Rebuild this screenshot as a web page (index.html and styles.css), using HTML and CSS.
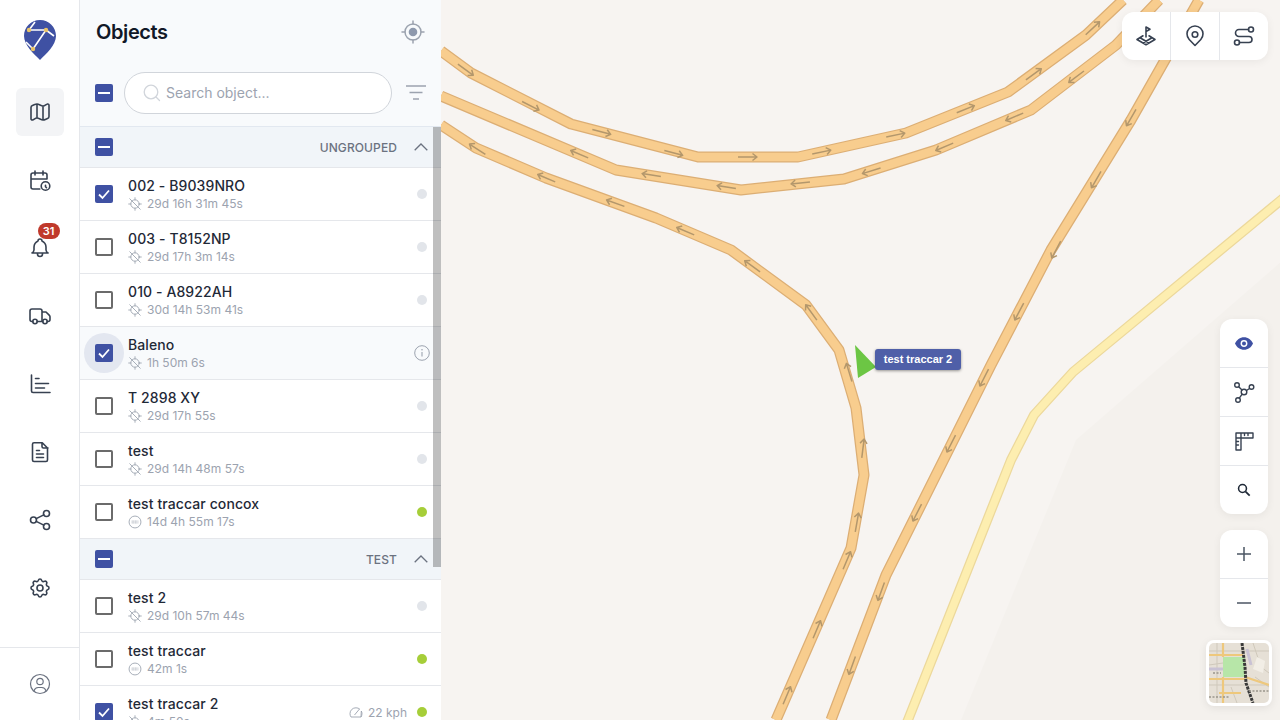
FILE: index.html
```html
<!DOCTYPE html>
<html lang="en">
<head>
<meta charset="utf-8">
<title>Objects</title>
<link rel="stylesheet" href="styles.css">
</head>
<body>
<svg class="defs" width="0" height="0" aria-hidden="true">
  <defs>
    <symbol id="i-gps" viewBox="0 0 16 16"><g fill="none" stroke="currentColor" stroke-width="1" stroke-linecap="round"><circle cx="8" cy="8" r="4.8"/><path d="M8 .8v2.4M8 12.8v2.4M.8 8h2.4M12.8 8h2.4M2 2l12 12"/></g></symbol>
    <symbol id="i-stop" viewBox="0 0 16 16"><circle cx="8" cy="8" r="6.8" fill="none" stroke="currentColor" stroke-width="1"/><path d="M4.2 6.8h7.6M4.2 8h7.6M4.2 9.2h7.6" stroke="currentColor" stroke-width=".7" stroke-dasharray="1.2 .6"/></symbol>
    <symbol id="a" viewBox="-11 -5 22 10" overflow="visible"><path d="M-10 0H9M4.5-3.5 9 0 4.5 3.5" fill="none" stroke="#b3976c" stroke-width="1.5" stroke-linejoin="round"/></symbol>
  </defs>
</svg>
<div class="app">
  <nav class="rail">
    <div class="logo">
      <svg width="32" height="40" viewBox="0 0 32 40"><path d="M16 0C7 0 0 7 0 16c0 9 10 18 16 24 6-6 16-15 16-24C32 7 25 0 16 0z" fill="#3f51a3"/><path d="M5 10h17L9 29M9 29l-7-7M22 10l8 6M5 10l6-8" fill="none" stroke="#fff" stroke-width="1.6"/><circle cx="5" cy="10" r="2.2" fill="#e9c46a"/><circle cx="22" cy="10" r="2.2" fill="#e9c46a"/><circle cx="9" cy="29" r="2.2" fill="#e9c46a"/></svg>
    </div>
    <div class="rail-items">
      <a class="rail-item active"><svg class="ic" viewBox="0 0 24 24"><path d="M3 7.5c0-1 .5-1.7 1.4-2C6 5 7.500 4 9 4c2 0 4 2 6 2s2.800-1.500 4.500-2c.9-.2 1.500.5 1.500 1.300V16.500c0 1-.5 1.700-1.400 2C18 19 16.500 20 15 20c-2 0-4-2-6-2s-2.800 1.500-4.500 2c-.9.2-1.500-.5-1.500-1.300zM9 4v14M15 6v14"/></svg></a>
      <a class="rail-item"><svg class="ic" viewBox="0 0 24 24"><path d="M11.800 21H5a2 2 0 0 1-2-2V7a2 2 0 0 1 2-2h12a2 2 0 0 1 2 2v4M15 3v4M7 3v4M3 11h16M17.500 17.200v1.500l1 1"/><circle cx="17.500" cy="18" r="4.300"/></svg></a>
      <a class="rail-item"><svg class="ic" viewBox="0 0 24 24"><path d="M10 5a2 2 0 1 1 4 0 7 7 0 0 1 4 6v3a4 4 0 0 0 2 3H4a4 4 0 0 0 2-3v-3a7 7 0 0 1 4-6M9.500 17v1a2.500 2.500 0 0 0 5 0v-1"/></svg><span class="badge">31</span></a>
      <a class="rail-item"><svg class="ic" viewBox="0 0 24 24"><circle cx="7" cy="17.500" r="2.200"/><circle cx="17" cy="17.500" r="2.200"/><path d="M4.800 17.500H4a2 2 0 0 1-2-2V7a2 2 0 0 1 2-2h8a2 2 0 0 1 2 2v10.500M9.200 17.500h5.600M19.200 17.500h.8a2 2 0 0 0 2-2v-2.700a2 2 0 0 0-.6-1.400L18 8h-4"/></svg></a>
      <a class="rail-item"><svg class="ic" viewBox="0 0 24 24"><path d="M3.500 3v16a1.500 1.500 0 0 0 1.500 1.500h17M7.500 6.500h3.500M7.500 11.500h13M7.500 16h9"/></svg></a>
      <a class="rail-item"><svg class="ic" viewBox="0 0 24 24"><path d="M14 2.800v3.700a1.500 1.500 0 0 0 1.500 1.500H20M18 21.500H6a1.500 1.500 0 0 1-1.500-1.500V4.300A1.500 1.500 0 0 1 6 2.800h8.300l5.200 5.200v12a1.500 1.500 0 0 1-1.500 1.500zM8.500 10.500h3M8.500 14h7M8.500 17.500h7"/></svg></a>
      <a class="rail-item"><svg class="ic" viewBox="0 0 24 24"><circle cx="5.500" cy="12" r="3"/><circle cx="18.500" cy="5.500" r="3"/><circle cx="18.500" cy="18.500" r="3"/><path d="M8.200 10.600l7.600-3.700M8.200 13.400l7.600 3.700"/></svg></a>
      <a class="rail-item"><svg class="ic" viewBox="0 0 24 24"><path d="M10.325 4.317c.426-1.756 2.924-1.756 3.350 0a1.724 1.724 0 0 0 2.573 1.066c1.543-.94 3.310.826 2.370 2.370a1.724 1.724 0 0 0 1.065 2.572c1.756.426 1.756 2.924 0 3.350a1.724 1.724 0 0 0-1.066 2.573c.94 1.543-.826 3.310-2.370 2.370a1.724 1.724 0 0 0-2.572 1.065c-.426 1.756-2.924 1.756-3.350 0a1.724 1.724 0 0 0-2.573-1.066c-1.543.94-3.310-.826-2.370-2.370a1.724 1.724 0 0 0-1.065-2.572c-1.756-.426-1.756-2.924 0-3.350a1.724 1.724 0 0 0 1.066-2.573c-.94-1.543.826-3.310 2.370-2.370 1 .608 2.296.07 2.572-1.065z"/><circle cx="12" cy="12" r="3"/></svg></a>
    </div>
    <div class="rail-foot"><svg class="ic avatar" viewBox="0 0 24 24"><circle cx="12" cy="12" r="9.500"/><circle cx="12" cy="9.500" r="3.200"/><path d="M6 18.800a4.500 4.500 0 0 1 4.200-3.300h3.600a4.500 4.500 0 0 1 4.200 3.300"/></svg></div>
  </nav>

  <section class="panel">
    <header class="panel-head">
      <h1 class="title">Objects</h1>
      <svg class="target" viewBox="0 0 24 24"><circle cx="12" cy="12" r="8" fill="none" stroke="#9ca3af" stroke-width="1.500"/><circle cx="12" cy="12" r="4.300" fill="#8e99ad"/><path d="M12 1v3M12 20v3M1 12h3M20 12h3" stroke="#9ca3af" stroke-width="1.500" stroke-linecap="round"/></svg>
    </header>
    <div class="search-row">
      <span class="cb on"><span class="dash"></span></span>
      <label class="search">
        <svg class="search-ic" viewBox="0 0 20 20"><circle cx="9" cy="9" r="6.800" fill="none" stroke="#d1d5db" stroke-width="1.300"/><path d="M14 14l3.500 3.500" stroke="#d1d5db" stroke-width="1.300" stroke-linecap="round"/></svg>
        <span class="placeholder">Search object...</span>
      </label>
      <svg class="filter" viewBox="0 0 20 16"><path d="M0 1h20M3.500 7.500h13M7 14h6" stroke="#9ca3af" stroke-width="1.500"/></svg>
    </div>
    <div class="list">
      <div class="group"><span class="cb on"><span class="dash"></span></span><span class="group-name">UNGROUPED</span><svg class="chev" viewBox="0 0 14 8"><path d="M.7 7.300 7 1l6.300 6.300" fill="none" stroke="#6b7280" stroke-width="1.300"/></svg></div>
      <div class="row"><span class="cb on"><svg class="tick" viewBox="0 0 18 18"><path d="M4 9.500l3.500 3.500L14 5.500" fill="none" stroke="#fff" stroke-width="1.800"/></svg></span><div class="info"><div class="name">002 - B9039NRO</div><div class="sub"><svg class="sub-ic"><use href="#i-gps"/></svg>29d 16h 31m 45s</div></div><span class="dot"></span></div>
      <div class="row"><span class="cb"></span><div class="info"><div class="name">003 - T8152NP</div><div class="sub"><svg class="sub-ic"><use href="#i-gps"/></svg>29d 17h 3m 14s</div></div><span class="dot"></span></div>
      <div class="row"><span class="cb"></span><div class="info"><div class="name">010 - A8922AH</div><div class="sub"><svg class="sub-ic"><use href="#i-gps"/></svg>30d 14h 53m 41s</div></div><span class="dot"></span></div>
      <div class="row hover"><span class="halo"></span><span class="cb on"><svg class="tick" viewBox="0 0 18 18"><path d="M4 9.500l3.500 3.500L14 5.500" fill="none" stroke="#fff" stroke-width="1.800"/></svg></span><div class="info"><div class="name">Baleno</div><div class="sub"><svg class="sub-ic"><use href="#i-gps"/></svg>1h 50m 6s</div></div><svg class="info-ic" viewBox="0 0 16 16"><circle cx="8" cy="8" r="7.300" fill="none" stroke="#9ca3af"/><path d="M8 7v4.500" stroke="#9ca3af" stroke-width="1.100"/><circle cx="8" cy="4.800" r=".8" fill="#9ca3af"/></svg></div>
      <div class="row"><span class="cb"></span><div class="info"><div class="name">T 2898 XY</div><div class="sub"><svg class="sub-ic"><use href="#i-gps"/></svg>29d 17h 55s</div></div><span class="dot"></span></div>
      <div class="row"><span class="cb"></span><div class="info"><div class="name">test</div><div class="sub"><svg class="sub-ic"><use href="#i-gps"/></svg>29d 14h 48m 57s</div></div><span class="dot"></span></div>
      <div class="row"><span class="cb"></span><div class="info"><div class="name">test traccar concox</div><div class="sub"><svg class="sub-ic"><use href="#i-stop"/></svg>14d 4h 55m 17s</div></div><span class="dot live"></span></div>
      <div class="group"><span class="cb on"><span class="dash"></span></span><span class="group-name">TEST</span><svg class="chev" viewBox="0 0 14 8"><path d="M.7 7.300 7 1l6.300 6.300" fill="none" stroke="#6b7280" stroke-width="1.300"/></svg></div>
      <div class="row"><span class="cb"></span><div class="info"><div class="name">test 2</div><div class="sub"><svg class="sub-ic"><use href="#i-gps"/></svg>29d 10h 57m 44s</div></div><span class="dot"></span></div>
      <div class="row"><span class="cb"></span><div class="info"><div class="name">test traccar</div><div class="sub"><svg class="sub-ic"><use href="#i-stop"/></svg>42m 1s</div></div><span class="dot live"></span></div>
      <div class="row"><span class="cb on"><svg class="tick" viewBox="0 0 18 18"><path d="M4 9.500l3.500 3.500L14 5.500" fill="none" stroke="#fff" stroke-width="1.800"/></svg></span><div class="info"><div class="name">test traccar 2</div><div class="sub"><svg class="sub-ic"><use href="#i-gps"/></svg>4m 50s</div></div><span class="speed"><svg class="speed-ic" viewBox="0 0 14 12"><path d="M2 11A6 6 0 0 1 1 7.500 5.800 5.800 0 0 1 7 1.800c1.500 0 2.800.5 3.800 1.300M12.300 5c.4.800.7 1.600.7 2.500 0 1.300-.4 2.500-1 3.500zM2 11h10M5.500 9l5-6" fill="none" stroke="#9ca3af" stroke-width=".9"/></svg>22 kph</span><span class="dot live"></span></div>
      <div class="thumb"></div>
    </div>
  </section>

  <main class="map">
    <svg class="map-art" viewBox="440 0 840 720">
      <rect x="440" y="0" width="840" height="720" fill="#f7f4f1"/>
      <path d="M1280 262 1075 440 960 720H1280z" fill="#f4f1ed"/>
      <g fill="none" stroke-linejoin="round">
        <g stroke="#dcae74" stroke-width="11">
          <path d="M440 51 470 73 570 124 697 157H797L905 133 1007 92 1085 35 1122 0"/>
          <path d="M440 96 615 170 740 190 843 179 935 150 1030 110 1115 45 1158 0"/>
          <path d="M440 125 475 148 545 178 655 218 730 250 805 305 838 350 855 408 863 475 850 548 775 720"/>
          <path d="M1198 0 1130 120 1050 250 990 365 885 575 830 720"/>
        </g>
        <g stroke="#f8cd8e" stroke-width="8.500">
          <path d="M440 51 470 73 570 124 697 157H797L905 133 1007 92 1085 35 1122 0"/>
          <path d="M440 96 615 170 740 190 843 179 935 150 1030 110 1115 45 1158 0"/>
          <path d="M440 125 475 148 545 178 655 218 730 250 805 305 838 350 855 408 863 475 850 548 775 720"/>
          <path d="M1198 0 1130 120 1050 250 990 365 885 575 830 720"/>
        </g>
        <path d="M1285 196 1072 372 1033 415 1010 460 905 725" stroke="#ecd89b" stroke-width="10"/>
        <path d="M1285 196 1072 372 1033 415 1010 460 905 725" stroke="#fdeeb0" stroke-width="7.500"/>
      </g>
      <g>
        <use href="#a" width="22" height="10" x="-11" y="-5" transform="translate(465 70) rotate(36)"/>
        <use href="#a" width="22" height="10" x="-11" y="-5" transform="translate(530 106) rotate(27)"/>
        <use href="#a" width="22" height="10" x="-11" y="-5" transform="translate(601 132) rotate(15)"/>
        <use href="#a" width="22" height="10" x="-11" y="-5" transform="translate(673 153) rotate(15)"/>
        <use href="#a" width="22" height="10" x="-11" y="-5" transform="translate(747 157)"/>
        <use href="#a" width="22" height="10" x="-11" y="-5" transform="translate(821 152) rotate(-12)"/>
        <use href="#a" width="22" height="10" x="-11" y="-5" transform="translate(895 135) rotate(-12)"/>
        <use href="#a" width="22" height="10" x="-11" y="-5" transform="translate(965 109) rotate(-22)"/>
        <use href="#a" width="22" height="10" x="-11" y="-5" transform="translate(1033 74) rotate(-36)"/>
        <use href="#a" width="22" height="10" x="-11" y="-5" transform="translate(1092 28) rotate(-43)"/>
        <use href="#a" width="22" height="10" x="-11" y="-5" transform="translate(578 154) rotate(203)"/>
        <use href="#a" width="22" height="10" x="-11" y="-5" transform="translate(650 175) rotate(189)"/>
        <use href="#a" width="22" height="10" x="-11" y="-5" transform="translate(725 187) rotate(189)"/>
        <use href="#a" width="22" height="10" x="-11" y="-5" transform="translate(799 183) rotate(174)"/>
        <use href="#a" width="22" height="10" x="-11" y="-5" transform="translate(870 171) rotate(163)"/>
        <use href="#a" width="22" height="10" x="-11" y="-5" transform="translate(943 147) rotate(157)"/>
        <use href="#a" width="22" height="10" x="-11" y="-5" transform="translate(1013 117) rotate(157)"/>
        <use href="#a" width="22" height="10" x="-11" y="-5" transform="translate(1075 77) rotate(143)"/>
        <use href="#a" width="22" height="10" x="-11" y="-5" transform="translate(476 149) rotate(213)"/>
        <use href="#a" width="22" height="10" x="-11" y="-5" transform="translate(545 178) rotate(203)"/>
        <use href="#a" width="22" height="10" x="-11" y="-5" transform="translate(614 203) rotate(200)"/>
        <use href="#a" width="22" height="10" x="-11" y="-5" transform="translate(684 231) rotate(203)"/>
        <use href="#a" width="22" height="10" x="-11" y="-5" transform="translate(751 266) rotate(216)"/>
        <use href="#a" width="22" height="10" x="-11" y="-5" transform="translate(810 312) rotate(234)"/>
        <use href="#a" width="22" height="10" x="-11" y="-5" transform="translate(848 372) rotate(253)"/>
        <use href="#a" width="22" height="10" x="-11" y="-5" transform="translate(862 448) rotate(277)"/>
        <use href="#a" width="22" height="10" x="-11" y="-5" transform="translate(856 522) rotate(280)"/>
        <use href="#a" width="22" height="10" x="-11" y="-5" transform="translate(846 560) rotate(293)"/>
        <use href="#a" width="22" height="10" x="-11" y="-5" transform="translate(816 629) rotate(293)"/>
        <use href="#a" width="22" height="10" x="-11" y="-5" transform="translate(786 695) rotate(293)"/>
        <use href="#a" width="22" height="10" x="-11" y="-5" transform="translate(1130 118) rotate(120)"/>
        <use href="#a" width="22" height="10" x="-11" y="-5" transform="translate(1095 180) rotate(120)"/>
        <use href="#a" width="22" height="10" x="-11" y="-5" transform="translate(1055 250) rotate(118)"/>
        <use href="#a" width="22" height="10" x="-11" y="-5" transform="translate(1018 312) rotate(118)"/>
        <use href="#a" width="22" height="10" x="-11" y="-5" transform="translate(983 378) rotate(117)"/>
        <use href="#a" width="22" height="10" x="-11" y="-5" transform="translate(950 444) rotate(117)"/>
        <use href="#a" width="22" height="10" x="-11" y="-5" transform="translate(916 513) rotate(117)"/>
        <use href="#a" width="22" height="10" x="-11" y="-5" transform="translate(880 592) rotate(110)"/>
        <use href="#a" width="22" height="10" x="-11" y="-5" transform="translate(851 666) rotate(110)"/>
      </g>
      <path d="M854 345 875 367 857 378z" fill="#6cc644"/>
    </svg>
    <div class="marker-label">test traccar 2</div>

    <div class="ctl ctl-top">
      <a class="cell"><svg class="ic" viewBox="0 0 24 24"><path d="M12 13V3l4 2.200-4 2.300M9 11.800 3 15.500l9 5.300 9-5.300-6-3.700M6 13.700l9 5.300M18 13.700l-9 5.300"/></svg></a>
      <a class="cell"><svg class="ic" viewBox="0 0 24 24"><circle cx="12" cy="10.500" r="2.800"/><path d="M12 21.500 6.200 15.500a8 8 0 1 1 11.600 0z"/></svg></a>
      <a class="cell"><svg class="ic" viewBox="0 0 24 24"><circle cx="19" cy="5.500" r="2.500"/><circle cx="5" cy="18.500" r="2.500"/><path d="M16.500 5.500H7a3.500 3.500 0 0 0 0 7h10a3 3 0 0 1 0 6H7.500"/></svg></a>
    </div>

    <div class="ctl ctl-tools">
      <a class="cell"><svg class="eye" viewBox="0 0 20 14"><path d="M10 0C5.500 0 1.800 2.800 0 7c1.800 4.200 5.500 7 10 7s8.200-2.800 10-7c-1.800-4.200-5.500-7-10-7z" fill="#3f51a3"/><circle cx="10" cy="7" r="3.800" fill="#fff"/><circle cx="10" cy="7" r="2.200" fill="#3f51a3"/></svg></a>
      <a class="cell"><svg class="ic thin" viewBox="0 0 24 24"><circle cx="12" cy="12" r="2.800"/><circle cx="5" cy="5" r="2.300"/><circle cx="19.500" cy="7" r="2.300"/><circle cx="6" cy="20" r="2.300"/><path d="M6.700 6.700l3.300 3.300M14.500 10.500l3-2M10 14.300l-2.700 3.800"/></svg></a>
      <a class="cell"><svg class="ic thin" viewBox="0 0 24 24"><path d="M4 4h17v5H9v12H4zM4 9h5M9 4v5M12.500 4v2.500M16 4v2.500M4 12.500h2.500M4 16h2.500"/></svg></a>
      <a class="cell"><svg class="mag" viewBox="0 0 16 16"><circle cx="6.300" cy="6.300" r="4.500" fill="none" stroke="#1f2937" stroke-width="1.800"/><path d="M9.800 9.800 14.500 14.500" stroke="#1f2937" stroke-width="2"/></svg></a>
    </div>

    <div class="ctl ctl-zoom">
      <a class="cell"><svg class="pm" viewBox="0 0 14 14"><path d="M7 0v14M0 7h14" stroke="#4b5563" stroke-width="1.500"/></svg></a>
      <a class="cell"><svg class="pm" viewBox="0 0 14 14"><path d="M0 7h14" stroke="#4b5563" stroke-width="1.500"/></svg></a>
    </div>

    <div class="minimap">
      <svg viewBox="0 0 60 60" width="60" height="60">
        <rect width="60" height="60" fill="#e6e0d6"/>
        <path d="M0 8H60M0 22 14 20M0 42H60M8 0V60M22 44 28 60M44 0 52 24 60 30M46 34 60 44" stroke="#cfc8bb" stroke-width="1" fill="none"/>
        <rect x="14" y="14" width="22" height="20" fill="#b7e6a8"/>
        <path d="M0 12H34M14 0V14M14 34V60M0 36H36M36 34 60 42M10 50H32" stroke="#eec87c" stroke-width="2.200" fill="none"/>
        <path d="M0 26H14M38 6 42 22" stroke="#c9c2d4" stroke-width="3" fill="none"/>
        <path d="M33 0 36 24 37 40 44 60" stroke="#3a3a3a" stroke-width="3" stroke-dasharray="3 1" fill="none"/>
        <path d="M48 14 56 18 54 30 44 26z" fill="#f2eee6"/>
        <path d="M0 54H20M40 48H60M4 30H12" stroke="#9a958c" stroke-width="1.500" stroke-dasharray="2 1.500" fill="none"/>
      </svg>
    </div>
  </main>
</div>
</body>
</html>
```
FILE: styles.css
```css
* { box-sizing: border-box; }
html, body { margin: 0; height: 100%; overflow: hidden; }
body { font-family: Inter, "Liberation Sans", sans-serif; color: #111827; background: #fff; }
.defs { position: absolute; }
.app { display: flex; height: 720px; }

.ic { width: 24px; height: 24px; fill: none; stroke: #374151; stroke-width: 1.6; stroke-linecap: round; stroke-linejoin: round; display: block; }
.ic.thin { stroke-width: 1.4; }

.rail { flex: 0 0 80px; display: flex; flex-direction: column; background: #fff; border-right: 1px solid #e5e7eb; }
.logo { height: 64px; padding-top: 20px; display: flex; justify-content: center; }
.rail-items { flex: 1; display: flex; flex-direction: column; align-items: center; gap: 20px; padding-top: 24px; }
.rail-item { position: relative; width: 48px; height: 48px; border-radius: 6px; display: flex; align-items: center; justify-content: center; }
.rail-item.active { background: #f3f4f6; }
.badge { position: absolute; top: -1px; left: 22px; min-width: 22px; height: 16px; border-radius: 8px; background: #c0392b; color: #fff; font-size: 11px; font-weight: 600; line-height: 16px; text-align: center; }
.rail-foot { height: 73px; border-top: 1px solid #e5e7eb; display: flex; align-items: center; justify-content: center; }
.avatar { stroke: #6b7280; stroke-width: 1.2; }

.panel { flex: 0 0 360px; display: flex; flex-direction: column; background: #f8fafc; min-height: 0; }
.panel-head { height: 64px; display: flex; align-items: center; justify-content: space-between; padding: 0 16px; }
.title { margin: 0; font-size: 20px; font-weight: 600; letter-spacing: -.4px; color: #111827; }
.target { width: 24px; height: 24px; display: block; }
.search-row { height: 63px; padding: 8px 15px 13px; display: flex; align-items: center; gap: 11px; border-bottom: 1px solid #e2e8f0; }
.search { flex: 0 0 268px; height: 42px; margin-bottom: 0; border: 1px solid #d1d5db; border-radius: 21px; background: #fff; display: flex; align-items: center; gap: 4px; padding-left: 17px; }
.search-ic { width: 20px; height: 20px; }
.placeholder { font-size: 14px; color: #9ca3af; }
.filter { width: 20px; height: 16px; margin-left: 3px; }

.cb { flex: none; width: 18px; height: 18px; border: 2px solid #6b6b6b; border-radius: 2px; display: flex; align-items: center; justify-content: center; position: relative; background: #fff; }
.cb.on { background: #3f51a3; border: 0; }
.dash { width: 12px; height: 2px; background: #fff; }
.tick { width: 18px; height: 18px; display: block; }

.list { flex: 1; position: relative; overflow: hidden; background: #fff; min-height: 0; }
.thumb { position: absolute; top: 0; right: 0; width: 8px; height: 440px; background: rgba(0, 0, 0, .25); }
.group { height: 41px; display: flex; align-items: center; padding: 0 13px 0 15px; background: #f1f5f9; border-bottom: 1px solid #e5e7eb; }
.group-name { margin-left: auto; font-size: 12px; font-weight: 500; color: #6b7280; letter-spacing: .1px; }
.chev { width: 14px; height: 8px; margin-left: 17px; display: block; }
.row { position: relative; height: 53px; display: flex; align-items: center; padding: 0 14px 0 15px; border-bottom: 1px solid #e5e7eb; background: #fff; }
.row.hover { background: #f8fafc; }
.halo { position: absolute; left: 4px; top: 6px; width: 40px; height: 40px; border-radius: 50%; background: #e3e7f0; }
.info { margin-left: 15px; flex: 1; min-width: 0; }
.name { font-size: 14px; line-height: 18px; font-weight: 500; color: #1f2937; letter-spacing: .1px; }
.sub { display: flex; align-items: center; gap: 5px; margin-top: 1px; font-size: 12px; line-height: 16px; color: #9ca3af; }
.sub-ic { width: 14px; height: 14px; color: #9ca3af; flex: none; }
.dot { width: 10px; height: 10px; border-radius: 50%; background: #e2e5ea; flex: none; }
.dot.live { background: #a6ce39; }
.info-ic { width: 16px; height: 16px; flex: none; margin-right: -3px; }
.speed { display: flex; align-items: center; gap: 5px; margin-right: 10px; font-size: 12px; color: #9ca3af; }
.speed-ic { width: 14px; height: 12px; }

.map { flex: 1; position: relative; overflow: hidden; background: #f7f4f1; }
.map-art { position: absolute; inset: 0; width: 840px; height: 720px; display: block; }
.marker-label { position: absolute; left: 434px; top: 349px; width: 86px; height: 21px; border-radius: 3px; background: #4f5fa8; color: #fff; font: 700 11px/21px "Liberation Sans", sans-serif; text-align: center; box-shadow: 0 1px 3px rgba(0, 0, 0, .4); }

.ctl { position: absolute; display: flex; background: #fff; border-radius: 12px; box-shadow: 0 2px 8px rgba(0, 0, 0, .06); }
.cell { display: flex; align-items: center; justify-content: center; }
.ctl-top { top: 12px; right: 12px; width: 146px; height: 48px; }
.ctl-top .cell { flex: 1; border-left: 1px solid #e5e7eb; }
.ctl-top .cell:first-child { border-left: 0; }
.ctl-tools, .ctl-zoom { right: 12px; width: 48px; flex-direction: column; }
.ctl-tools { top: 319px; height: 195px; }
.ctl-zoom { top: 530px; height: 97px; }
.ctl-tools .cell, .ctl-zoom .cell { flex: 1; border-top: 1px solid #e5e7eb; }
.ctl-tools .cell:first-child, .ctl-zoom .cell:first-child { border-top: 0; }
.eye { width: 18px; height: 13px; }
.mag { width: 14px; height: 14px; }
.pm { width: 14px; height: 14px; }
.minimap { position: absolute; left: 765px; top: 640px; width: 66px; height: 66px; padding: 3px; background: #fff; border-radius: 8px; box-shadow: 0 2px 8px rgba(0, 0, 0, .08); }
.minimap svg { display: block; border-radius: 5px; }
```
